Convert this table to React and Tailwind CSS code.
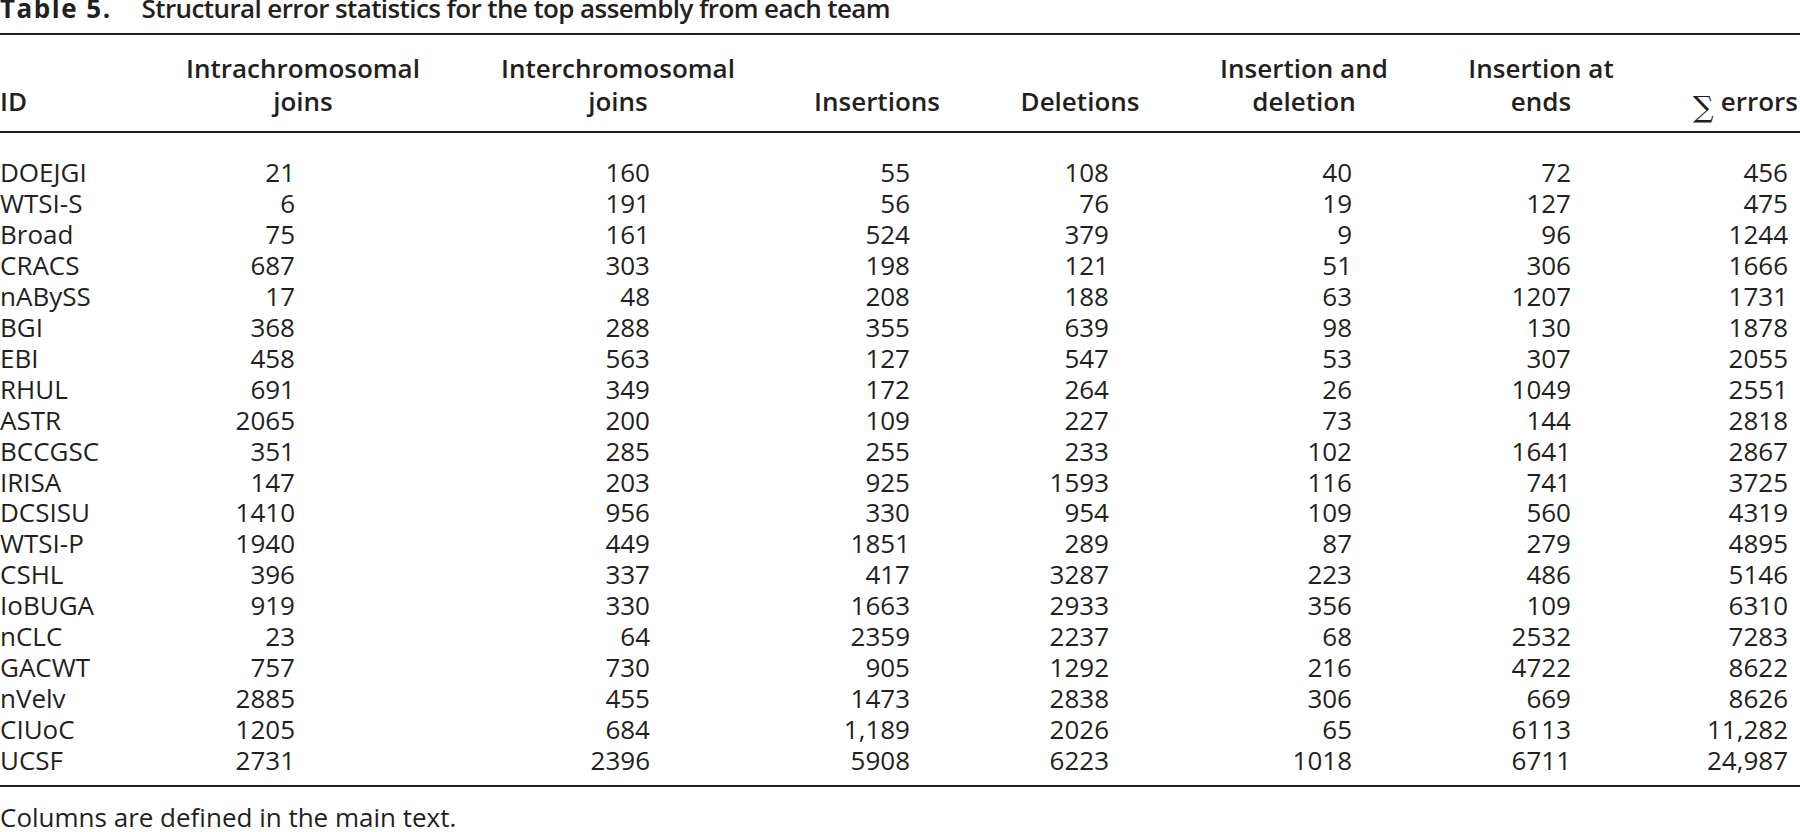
import React from 'react';

const rows = [
  ['DOEJGI', '21', '160', '55', '108', '40', '72', '456'],
  ['WTSI-S', '6', '191', '56', '76', '19', '127', '475'],
  ['Broad', '75', '161', '524', '379', '9', '96', '1244'],
  ['CRACS', '687', '303', '198', '121', '51', '306', '1666'],
  ['nABySS', '17', '48', '208', '188', '63', '1207', '1731'],
  ['BGI', '368', '288', '355', '639', '98', '130', '1878'],
  ['EBI', '458', '563', '127', '547', '53', '307', '2055'],
  ['RHUL', '691', '349', '172', '264', '26', '1049', '2551'],
  ['ASTR', '2065', '200', '109', '227', '73', '144', '2818'],
  ['BCCGSC', '351', '285', '255', '233', '102', '1641', '2867'],
  ['IRISA', '147', '203', '925', '1593', '116', '741', '3725'],
  ['DCSISU', '1410', '956', '330', '954', '109', '560', '4319'],
  ['WTSI-P', '1940', '449', '1851', '289', '87', '279', '4895'],
  ['CSHL', '396', '337', '417', '3287', '223', '486', '5146'],
  ['IoBUGA', '919', '330', '1663', '2933', '356', '109', '6310'],
  ['nCLC', '23', '64', '2359', '2237', '68', '2532', '7283'],
  ['GACWT', '757', '730', '905', '1292', '216', '4722', '8622'],
  ['nVelv', '2885', '455', '1473', '2838', '306', '669', '8626'],
  ['CIUoC', '1205', '684', '1,189', '2026', '65', '6113', '11,282'],
  ['UCSF', '2731', '2396', '5908', '6223', '1018', '6711', '24,987'],
];

// right padding so each number column ends where the print layout puts it
const pads = [
  'text-left',
  'text-right pr-[151px]',
  'text-right pr-[140px]',
  'text-right pr-[54px]',
  'text-right pr-[87px]',
  'text-right pr-[60px]',
  'text-right pr-[99px]',
  'text-right pr-[12px]',
];

const cols = 'grid grid-cols-[160px_286px_344px_174px_232px_216px_258px_130px]';

export default function App() {
  return (
    <div className="w-[1800px] bg-white text-[#231f20] font-['Open_Sans',sans-serif] text-[26px]">
      {/* Caption */}
      <div className="leading-[16px] flex">
        <span className="font-bold tracking-[1.5px]">Table 5.</span>
        <span className="ml-[30px] font-semibold tracking-[-0.6px]">Structural error statistics for the top assembly from each team</span>
      </div>

      {/* Header */}
      <div className="mt-[17px] border-t-2 border-[#231f20] pt-[17px] pb-[13px]">
        <div className={`${cols} items-end font-semibold leading-[33px]`}>
          <div className="text-left">ID</div>
          <div className="text-center">Intrachromosomal<br />joins</div>
          <div className="text-center">Interchromosomal<br />joins</div>
          <div className="text-center">Insertions</div>
          <div className="text-center">Deletions</div>
          <div className="text-center">Insertion and<br />deletion</div>
          <div className="text-center">Insertion at<br />ends</div>
          <div className="pr-[2px] flex items-end justify-end">
            <span className="font-['DejaVu_Serif',serif] font-normal text-[29px] leading-[33px] translate-y-[6px] mr-[7px]">∑</span>
            <span>errors</span>
          </div>
        </div>
      </div>

      {/* Body */}
      <div className="border-t-2 border-[#231f20] pt-[24px] pb-[9px] leading-[30.95px]">
        {rows.map((r) => (
          <div key={r[0]} className={cols}>
            {r.map((v, i) => (
              <div key={i} className={pads[i]}>{v}</div>
            ))}
          </div>
        ))}
      </div>

      {/* Footnote */}
      <div className="border-t-2 border-[#231f20] pt-[15px] leading-[30.95px]">
        Columns are defined in the main text.
      </div>
    </div>
  );
}
